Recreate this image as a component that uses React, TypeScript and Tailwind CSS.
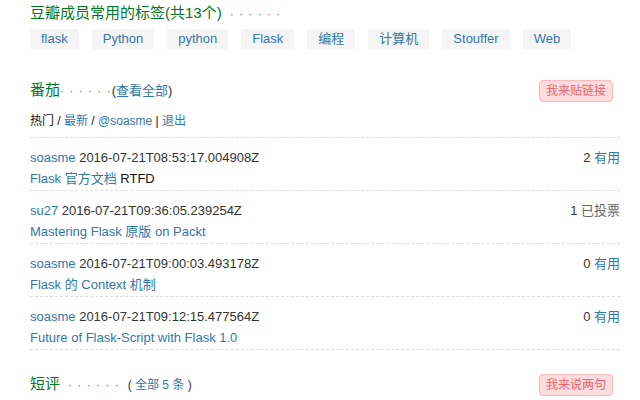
const tags = ['flask', 'Python', 'python', 'Flask', '编程', '计算机', 'Stouffer', 'Web'];

const links = [
  { user: 'soasme', time: '2016-07-21T08:53:17.004908Z', title: 'Flask 官方文档', extra: 'RTFD', count: 2, voted: false },
  { user: 'su27', time: '2016-07-21T09:36:05.239254Z', title: 'Mastering Flask 原版 on Packt', extra: '', count: 1, voted: true },
  { user: 'soasme', time: '2016-07-21T09:00:03.493178Z', title: 'Flask 的 Context 机制', extra: '', count: 0, voted: false },
  { user: 'soasme', time: '2016-07-21T09:12:15.477564Z', title: 'Future of Flask-Script with Flask 1.0', extra: '', count: 0, voted: false },
];

const PinkButton = ({ label }: { label: string }) => (
  <span className="mr-[7px] rounded-[4px] border border-[#fcb9bd] bg-[#ffdcdd] px-[6px] text-[12px] leading-[20px] text-[#e8646d]">
    {label}
  </span>
);

const Dots = ({ className }: { className?: string }) => (
  <span className={`text-[12px] tracking-[1px] text-[#777] ${className ?? ''}`}>· · · · · ·</span>
);

export default function App() {
  return (
    <div
      className="h-[400px] w-[640px] overflow-hidden bg-white pl-[30px] pr-[20px] pt-[3px] text-[#111]"
      style={{ fontFamily: '"Liberation Sans", "Noto Sans CJK SC", sans-serif' }}
    >
      {/* 标签 */}
      <h2 className="text-[15px] leading-[20px] text-[#072]">
        豆瓣成员常用的标签(共13个)
        <Dots className="ml-[8px]" />
      </h2>
      <div className="mt-[5px] flex gap-[13px]">
        {tags.map((tag) => (
          <span key={tag} className="bg-[#f5f5f5] px-[11px] text-[13px] leading-[20px] text-[#37a]">
            {tag}
          </span>
        ))}
      </div>

      {/* 番茄 */}
      <div className="mt-[30px] flex items-center justify-between">
        <h2 className="text-[15px] leading-[22px] text-[#072]">
          番茄
          <Dots />
          <span className="text-[13px] text-[#333]">
            (<span className="text-[#37a]">查看全部</span>)
          </span>
        </h2>
        <PinkButton label="我来贴链接" />
      </div>
      <div className="mt-[10px] text-[12px] leading-[18px] text-[#111]">
        热门 / <span className="text-[#37a]">最新</span> / <span className="text-[#37a]">@soasme</span> |{' '}
        <span className="text-[#37a]">退出</span>
      </div>

      <div className="mt-[7px] border-t border-dashed border-[#ddd]">
        {links.map((item) => (
          <div key={item.time} className="border-b border-dashed border-[#ddd] pt-[9px] text-[13px] leading-[21px]">
            <div className="flex justify-between">
              <div className="text-[#333]">
                <span className="text-[#37a]">{item.user}</span> {item.time}
              </div>
              <div className="text-[#333]">
                {item.count}{' '}
                {item.voted ? <span className="text-[#666]">已投票</span> : <span className="text-[#37a]">有用</span>}
              </div>
            </div>
            <div className="pb-[1px]">
              <span className="text-[#37a]">{item.title}</span>
              {item.extra && <span className="text-[#111]"> {item.extra}</span>}
            </div>
          </div>
        ))}
      </div>

      {/* 短评 */}
      <div className="mt-[22px] flex items-center justify-between">
        <h2 className="text-[15px] leading-[24px] text-[#072]">
          短评
          <Dots className="ml-[8px]" />
          <span className="ml-[8px] text-[12px] text-[#333]">
            ( <span className="text-[#37a]">全部 5 条</span> )
          </span>
        </h2>
        <PinkButton label="我来说两句" />
      </div>
    </div>
  );
}
